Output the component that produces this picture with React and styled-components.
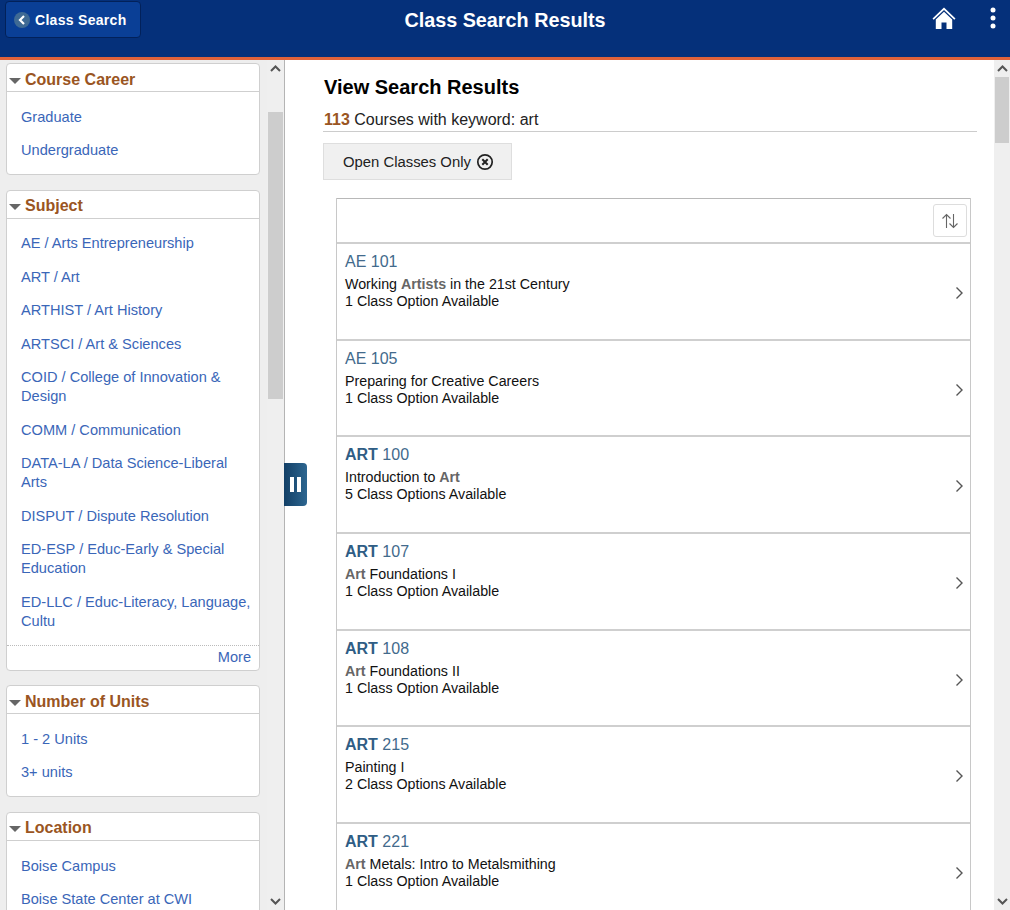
import React from "react";
import styled, { createGlobalStyle } from "styled-components";

const facets = [
  { title: "Course Career", items: ["Graduate", "Undergraduate"] },
  {
    title: "Subject",
    more: true,
    items: [
      "AE / Arts Entrepreneurship",
      "ART / Art",
      "ARTHIST / Art History",
      "ARTSCI / Art & Sciences",
      "COID / College of Innovation & Design",
      "COMM / Communication",
      "DATA-LA / Data Science-Liberal Arts",
      "DISPUT / Dispute Resolution",
      "ED-ESP / Educ-Early & Special Education",
      "ED-LLC / Educ-Literacy, Language, Cultu",
    ],
  },
  { title: "Number of Units", items: ["1 - 2 Units", "3+ units"] },
  { title: "Location", items: ["Boise Campus", "Boise State Center at CWI"] },
];

const courses = [
  { subject: "AE", num: "101", desc: <>Working <b>Artists</b> in the 21st Century</>, options: "1 Class Option Available" },
  { subject: "AE", num: "105", desc: "Preparing for Creative Careers", options: "1 Class Option Available" },
  { subject: "ART", hit: true, num: "100", desc: <>Introduction to <b>Art</b></>, options: "5 Class Options Available" },
  { subject: "ART", hit: true, num: "107", desc: <><b>Art</b> Foundations I</>, options: "1 Class Option Available" },
  { subject: "ART", hit: true, num: "108", desc: <><b>Art</b> Foundations II</>, options: "1 Class Option Available" },
  { subject: "ART", hit: true, num: "215", desc: "Painting I", options: "2 Class Options Available" },
  { subject: "ART", hit: true, num: "221", desc: <><b>Art</b> Metals: Intro to Metalsmithing</>, options: "1 Class Option Available" },
];

const Global = createGlobalStyle`
  html, body { margin: 0; height: 100%; overflow: hidden; }
  body { font-family: "Liberation Sans", Arial, sans-serif; background: #fff; }
`;

const Page = styled.div`
  height: 910px;
  display: flex;
  flex-direction: column;
  overflow: hidden;
`;

const Banner = styled.header`
  flex: none;
  height: 60px;
  box-sizing: border-box;
  border-bottom: 3px solid #e0623a;
  background: #05307a;
  position: relative;
  display: flex;
  justify-content: space-between;
  align-items: flex-start;
  padding: 1px 14px 0 5px;
`;

const BackButton = styled.button`
  width: 136px;
  height: 37px;
  padding: 0 0 0 8px;
  display: flex;
  align-items: center;
  gap: 5px;
  background: #0a3f96;
  border: 1px solid #02215a;
  border-radius: 4px;
  color: #fff;
  font: bold 14px "Liberation Sans", Arial, sans-serif;
  letter-spacing: 0.3px;
`;

const BackCircle = styled.span`
  width: 16px;
  height: 16px;
  border-radius: 50%;
  background: #3f6a94;
  display: flex;
  align-items: center;
  justify-content: center;
`;

const BannerTitle = styled.h1`
  position: absolute;
  left: 0;
  right: 0;
  top: 8px;
  margin: 0;
  text-align: center;
  color: #fff;
  font-size: 19.8px;
  line-height: 24px;
  font-weight: bold;
  pointer-events: none;
`;

const BannerIcons = styled.div`
  display: flex;
  align-items: center;
  gap: 34px;
  padding-top: 5px;
`;

const Body = styled.div`
  flex: 1;
  min-height: 0;
  display: flex;
  position: relative;
`;

const Side = styled.aside`
  flex: none;
  width: 285px;
  display: flex;
  background: #eee;
  border-right: 1px solid #b4b4b4;
  box-sizing: border-box;
`;

const Facets = styled.div`
  flex: 1;
  min-width: 0;
  height: 850px;
  box-sizing: border-box;
  overflow: hidden;
  padding: 3px 7px 0 6px;
  display: flex;
  flex-direction: column;
  gap: 14.6px;
`;

const Card = styled.section`
  flex: none;
  background: #fff;
  border: 1px solid #cfcfcf;
  border-radius: 4px;
`;

const CardHead = styled.h2`
  margin: 0;
  height: 28px;
  display: flex;
  align-items: center;
  gap: 4px;
  padding: 4px 0 0 2px;
  box-sizing: border-box;
  border-bottom: 1px solid #cfcfcf;
  color: #9a5522;
  font-size: 16px;
  font-weight: bold;
`;

const Caret = styled.span`
  width: 0;
  height: 0;
  margin-top: 2px;
  border-left: 6px solid transparent;
  border-right: 6px solid transparent;
  border-top: 6px solid #666;
`;

const List = styled.ul`
  list-style: none;
  margin: 0;
  padding: 8.5px 7px 6.5px 14px;
`;

const Item = styled.li`
  padding: 7.25px 0;
  font-size: 14.6px;
  line-height: 19px;
  color: #3a66b8;
`;

const More = styled.div`
  border-top: 1px dotted #bbb;
  height: 24px;
  padding-right: 8px;
  text-align: right;
  font-size: 14.6px;
  line-height: 23px;
  color: #3a66b8;
`;

const Bar = styled.div`
  flex: none;
  width: ${(p) => p.$width}px;
  display: flex;
  flex-direction: column;
  align-items: center;
  background: #efefef;
  box-sizing: border-box;
  padding: 0 1px;
`;

const BarButton = styled.div`
  flex: none;
  height: 17px;
  display: flex;
  align-items: center;
  justify-content: center;
`;

const Track = styled.div`
  flex: 1;
  width: 100%;
`;

const Thumb = styled.div`
  width: 100%;
  background: #cdcdcd;
  margin-top: ${(p) => p.$top}px;
  height: ${(p) => p.$size}px;
`;

const Scrollbar = ({ width, top, size }) => (
  <Bar $width={width}>
    <BarButton>
      <svg width="11" height="7" viewBox="0 0 11 7"><path d="M1 6l4.5-4.5L10 6" fill="none" stroke="#555" strokeWidth="2" /></svg>
    </BarButton>
    <Track><Thumb $top={top} $size={size} /></Track>
    <BarButton>
      <svg width="11" height="7" viewBox="0 0 11 7"><path d="M1 1l4.5 4.5L10 1" fill="none" stroke="#555" strokeWidth="2" /></svg>
    </BarButton>
  </Bar>
);

const PauseTab = styled.button`
  position: absolute;
  left: 284px;
  top: 403px;
  width: 23px;
  height: 43px;
  padding: 0;
  border: none;
  border-radius: 0 4px 4px 0;
  background: linear-gradient(90deg, #123f66, #2d6690);
  display: flex;
  align-items: center;
  justify-content: center;
  gap: 3px;
`;

const PauseStroke = styled.span`
  width: 4px;
  height: 15px;
  background: #fff;
`;

const Main = styled.main`
  flex: 1;
  min-width: 0;
  display: flex;
`;

const Content = styled.div`
  flex: 1;
  min-width: 0;
  height: 850px;
  overflow: hidden;
  padding: 14px 17px 0 38px;
`;

const Title = styled.h2`
  margin: 0;
  font-size: 20px;
  line-height: 26px;
  font-weight: bold;
  color: #000;
  padding-left: 1px;
`;

const Count = styled.div`
  margin-top: 8px;
  height: 23px;
  padding-left: 1px;
  border-bottom: 1px solid #ccc;
  font-size: 16px;
  line-height: 24px;
  color: #222;
  b { color: #9a5522; }
`;

const Chip = styled.button`
  margin-top: 11px;
  width: 189px;
  height: 37px;
  padding: 0 0 0 19px;
  display: flex;
  align-items: center;
  gap: 5px;
  background: #f0f0f0;
  border: 1px solid #dedede;
  color: #222;
  font: 14.85px "Liberation Sans", Arial, sans-serif;
`;

const Results = styled.div`
  margin: 18px 6px 0 13px;
  border-left: 1px solid #c8c8c8;
  border-right: 1px solid #c8c8c8;
`;

const ResultsBar = styled.div`
  height: 38px;
  border-top: 1px solid #b8b8b8;
  display: flex;
  justify-content: flex-end;
  align-items: flex-start;
  padding: 5px 3px 0 0;
`;

const SortButton = styled.button`
  width: 34px;
  height: 33px;
  padding: 0;
  border: 1px solid #ddd;
  border-radius: 3px;
  background: #fff;
  display: flex;
  align-items: center;
  justify-content: center;
`;

const Row = styled.div`
  height: 96.67px;
  box-sizing: border-box;
  border-top: 2px solid #cfcfcf;
  padding: 7px 8px 0;
  position: relative;
`;

const Code = styled.div`
  font-size: 16px;
  line-height: 21px;
  color: #426a8c;
  b { font-weight: bold; color: #2f5d85; }
`;

const Line = styled.div`
  font-size: 14.25px;
  line-height: 17px;
  color: #111;
  b { color: #666; font-weight: bold; }
`;

const Desc = styled(Line)`
  margin-top: 4px;
`;

const Chevron = styled.svg`
  position: absolute;
  right: 6px;
  top: 42px;
`;

export default function App() {
  return (
    <Page>
      <Global />
      <Banner>
        <BackButton>
          <BackCircle>
            <svg width="8" height="10" viewBox="0 0 8 10"><path d="M6 1L2 5l4 4" fill="none" stroke="#fff" strokeWidth="2.2" /></svg>
          </BackCircle>
          Class Search
        </BackButton>
        <BannerTitle>Class Search Results</BannerTitle>
        <BannerIcons>
          <svg width="24" height="24" viewBox="0 0 24 24">
            <path d="M12 1.5L0.5 12.5l1.2 1.2L12 4l10.3 9.7 1.2-1.2z" fill="#fff" />
            <path d="M12 5.8L3.8 13.5V23h5.7v-6.5h5V23h5.7v-9.5z" fill="#fff" />
          </svg>
          <svg width="6" height="24" viewBox="0 0 6 24">
            <circle cx="3" cy="4" r="2.5" fill="#fff" />
            <circle cx="3" cy="12" r="2.5" fill="#fff" />
            <circle cx="3" cy="20" r="2.5" fill="#fff" />
          </svg>
        </BannerIcons>
      </Banner>
      <Body>
        <Side>
          <Facets>
            {facets.map((f) => (
              <Card key={f.title}>
                <CardHead><Caret />{f.title}</CardHead>
                <List>
                  {f.items.map((item) => <Item key={item}>{item}</Item>)}
                </List>
                {f.more && <More>More</More>}
              </Card>
            ))}
          </Facets>
          <Scrollbar width={17} top={35} size={287} />
        </Side>
        <PauseTab aria-label="Pause">
          <PauseStroke />
          <PauseStroke />
        </PauseTab>
        <Main>
          <Content>
            <Title>View Search Results</Title>
            <Count><b>113</b> Courses with keyword: art</Count>
            <Chip>
              Open Classes Only
              <svg width="18" height="18" viewBox="0 0 18 18">
                <circle cx="9" cy="9" r="7.2" fill="none" stroke="#222" strokeWidth="1.7" />
                <path d="M6.3 6.3l5.4 5.4M11.7 6.3l-5.4 5.4" stroke="#222" strokeWidth="2" />
              </svg>
            </Chip>
            <Results>
              <ResultsBar>
                <SortButton aria-label="Sort">
                  <svg width="18" height="18" viewBox="0 0 18 18">
                    <path d="M5.5 16V2.5M1.5 6.5l4-4 4 4M12.5 2v13.5M8.5 11.5l4 4 4-4" fill="none" stroke="#666" strokeWidth="1.1" />
                  </svg>
                </SortButton>
              </ResultsBar>
              {courses.map((c) => (
                <Row key={c.subject + c.num}>
                  <Code>{c.hit ? <b>{c.subject}</b> : c.subject} {c.num}</Code>
                  <Desc>{c.desc}</Desc>
                  <Line>{c.options}</Line>
                  <Chevron width="9" height="14" viewBox="0 0 9 14">
                    <path d="M1.5 1.5L7 7l-5.5 5.5" fill="none" stroke="#555" strokeWidth="1.4" />
                  </Chevron>
                </Row>
              ))}
            </Results>
          </Content>
          <Scrollbar width={16} top={0} size={66} />
        </Main>
      </Body>
    </Page>
  );
}
